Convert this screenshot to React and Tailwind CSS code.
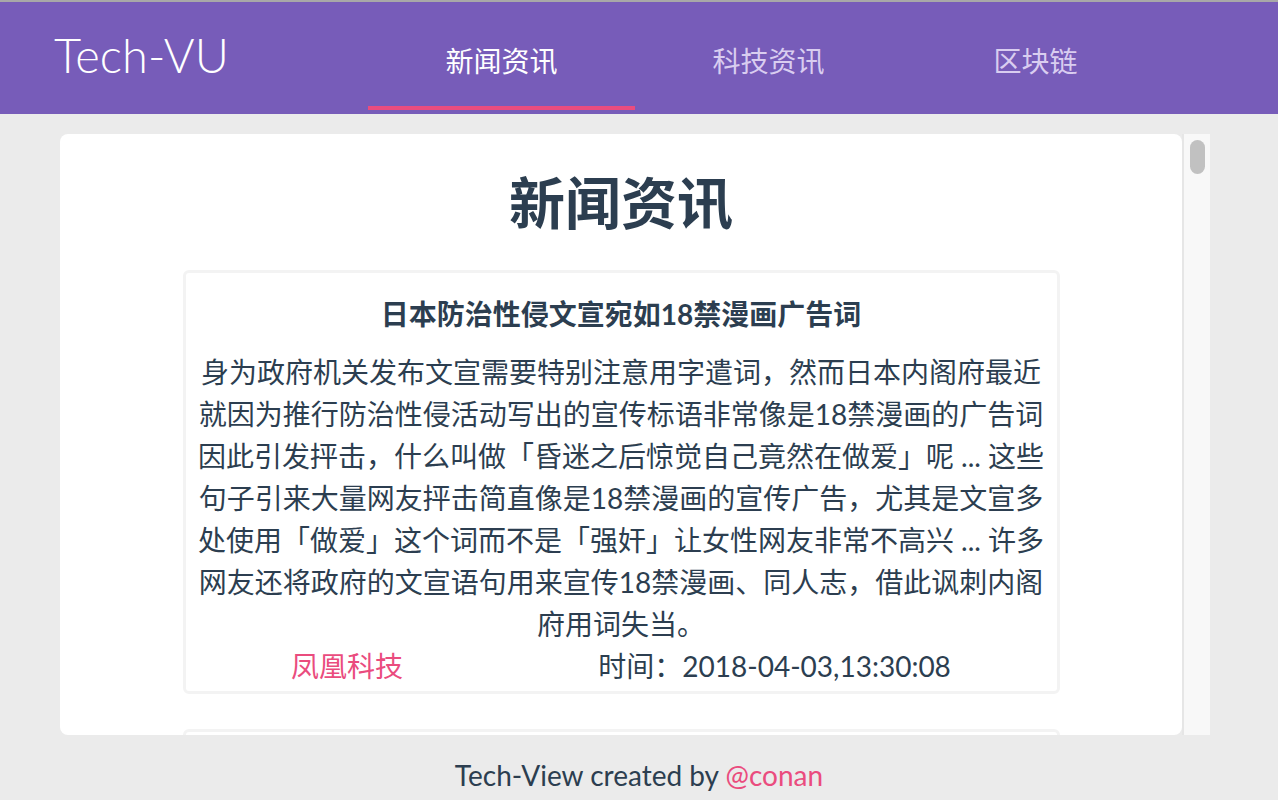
export default function App() {
  const font = { fontFamily: '"Lato", "Noto Sans CJK SC", sans-serif' };
  return (
    <div className="w-[1278px] h-[800px] bg-[#ebebeb] flex flex-col overflow-hidden text-[#2c3e50]" style={font}>
      <div className="h-[2px] bg-[#a8a8a8]" />
      <header className="h-[112px] bg-[#775cb9] flex items-stretch">
        <div className="w-[368px] pl-[54px] flex items-center">
          <span className="text-[47px] font-light text-white leading-none -mt-[6px]">Tech-VU</span>
        </div>
        {["新闻资讯", "科技资讯", "区块链"].map((t, i) => (
          <div key={t} className="w-[267px] flex flex-col">
            <div className={`flex-1 flex items-center justify-center text-[28px] pt-[14px] ${i === 0 ? "text-white" : "text-[#d9cdf0]"}`}>
              {t}
            </div>
            <div className={`h-[4px] mb-[4px] ${i === 0 ? "bg-[#ea4c7e]" : ""}`} />
          </div>
        ))}
      </header>
      <div className="h-[20px]" />
      <div className="ml-[60px] w-[1150px] h-[601px] flex">
        <div className="w-[1122px] bg-white rounded-[8px] overflow-hidden flex flex-col items-center">
          <h1 className="text-[56px] font-bold leading-[1.2] mt-[35px] mb-[34px]">新闻资讯</h1>
          <div className="w-[877px] border-[3px] border-[#f3f3f3] rounded-[6px] px-[8px] pt-[20px] pb-[4px] text-center">
            <h3 className="text-[28px] font-bold leading-[42px] mb-[16px]">日本防治性侵文宣宛如18禁漫画广告词</h3>
            <p className="text-[28px] leading-[42px]">
              身为政府机关发布文宣需要特别注意用字遣词，然而日本内阁府最近就因为推行防治性侵活动写出的宣传标语非常像是18禁漫画的广告词因此引发抨击，什么叫做「昏迷之后惊觉自己竟然在做爱」呢 ... 这些句子引来大量网友抨击简直像是18禁漫画的宣传广告，尤其是文宣多处使用「做爱」这个词而不是「强奸」让女性网友非常不高兴 ... 许多网友还将政府的文宣语句用来宣传18禁漫画、同人志，借此讽刺内阁府用词失当。
            </p>
            <div className="flex justify-around text-[28px] leading-[42px]">
              <span className="text-[#ea4c7e]">凤凰科技</span>
              <span>时间：2018-04-03,13:30:08</span>
            </div>
          </div>
          <div className="w-[877px] h-[100px] shrink-0 border-[3px] border-[#f3f3f3] rounded-[6px] mt-[35px]" />
        </div>
        <div className="w-[2px] bg-[#e6e6e6]" />
        <div className="w-[26px] bg-[#f8f8f8] pt-[6px] pl-[6px]">
          <div className="w-[15px] h-[34px] rounded-full bg-[#c1c1c1]" />
        </div>
      </div>
      <footer className="flex-1 flex items-center justify-center text-[28px] pt-[14px]">
        <span>
          Tech-View created by <span className="text-[#ea4c7e]">@conan</span>
        </span>
      </footer>
    </div>
  );
}
